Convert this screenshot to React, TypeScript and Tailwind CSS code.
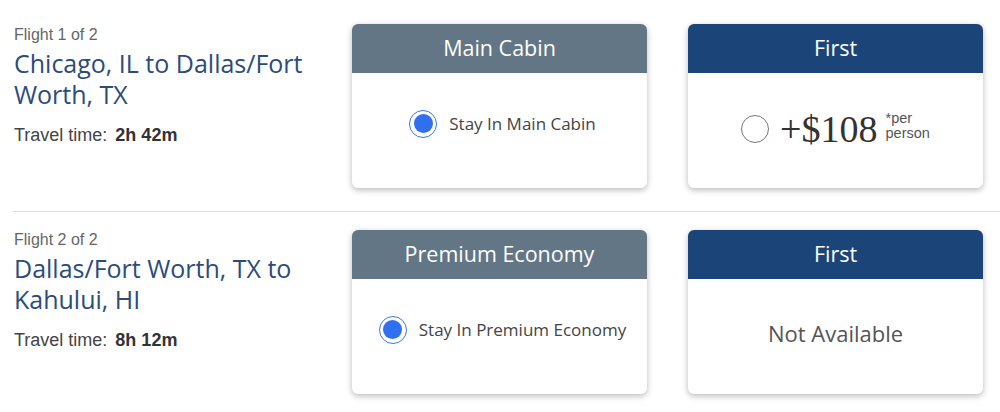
import React from 'react';

interface Flight {
  label: string;
  route: string;
  travel: string;
  cabin: string;
  stayLabel: string;
  upgrade: string | null;
}

const flights: Flight[] = [
  {
    label: 'Flight 1 of 2',
    route: 'Chicago, IL to Dallas/Fort Worth, TX',
    travel: '2h 42m',
    cabin: 'Main Cabin',
    stayLabel: 'Stay In Main Cabin',
    upgrade: '+$108',
  },
  {
    label: 'Flight 2 of 2',
    route: 'Dallas/Fort Worth, TX to Kahului, HI',
    travel: '8h 12m',
    cabin: 'Premium Economy',
    stayLabel: 'Stay In Premium Economy',
    upgrade: null,
  },
];

const humanist = { fontFamily: '"Open Sans", "Noto Sans", sans-serif' };
const arial = { fontFamily: '"Liberation Sans", Arial, sans-serif' };

function Card({ title, dark, children }: { title: string; dark?: boolean; children: React.ReactNode }) {
  return (
    <div className="w-[295px] h-[164px] rounded-[6px] bg-white overflow-hidden flex flex-col shadow-[0_2px_6px_rgba(0,0,0,0.28)]">
      <div
        className={
          dark
            ? 'h-[49px] shrink-0 bg-[#1b4479] flex items-center justify-center text-white text-[21.5px]'
            : 'h-[49px] shrink-0 bg-[#637685] flex items-center justify-center text-white text-[21.5px]'
        }
        style={humanist}
      >
        {title}
      </div>
      <div className="flex-1 flex items-center justify-center">{children}</div>
    </div>
  );
}

function FlightRow({ flight, first }: { flight: Flight; first: boolean }) {
  return (
    <div className={first ? 'flex pt-[24px] pb-[23px]' : 'flex pt-[18px] pb-[19px]'}>
      {/* Flight info */}
      <div className={first ? 'w-[352px] pl-[14px] pt-[2px]' : 'w-[352px] pl-[14px] pt-[1px]'}>
        <div className="text-[16px] leading-[18px] text-[#666]" style={arial}>
          {flight.label}
        </div>
        <div className="mt-[4px] text-[25px] leading-[31px] text-[#2c4c7c] w-[300px]" style={humanist}>
          {flight.route}
        </div>
        <div className="mt-[15px] text-[18px] leading-[20px] text-[#444]" style={arial}>
          Travel time: <span className="ml-[3px] font-bold text-[#333]">{flight.travel}</span>
        </div>
      </div>

      <div className="flex gap-[41px]">
        {/* Current cabin */}
        <Card title={flight.cabin}>
          <div className="flex items-center gap-[12px] pb-[14px] pl-[6px]">
            <div className="w-[28px] h-[28px] rounded-full border-[1.5px] border-[#3b78e0] flex items-center justify-center">
              <div className="w-[19px] h-[19px] rounded-full bg-[#2f6ff0]" />
            </div>
            <span className="text-[17px] text-[#444]" style={humanist}>
              {flight.stayLabel}
            </span>
          </div>
        </Card>

        {/* Upgrade */}
        <Card title="First" dark>
          {flight.upgrade ? (
            <div className="flex items-center pb-[3px]">
              <div className="w-[28px] h-[28px] rounded-full border-[1.5px] border-[#777]" />
              <span
                className="ml-[11px] text-[38px] leading-none text-[#333]"
                style={{ fontFamily: '"Liberation Serif", "Times New Roman", serif' }}
              >
                {flight.upgrade}
              </span>
              <span className="ml-[8px] mb-[6px] text-[14.5px] leading-[15px] text-[#555]" style={arial}>
                <span className="block">*per</span>
                <span className="block">person</span>
              </span>
            </div>
          ) : (
            <span className="pb-[6px] text-[22px] text-[#555]" style={humanist}>
              Not Available
            </span>
          )}
        </Card>
      </div>
    </div>
  );
}

export default function App() {
  return (
    <div className="w-[1000px] h-[412px] bg-white overflow-hidden">
      {flights.map((f, i) => (
        <React.Fragment key={f.label}>
          {i > 0 && <div className="ml-[13px] h-px bg-[#dcdcdc]" />}
          <FlightRow flight={f} first={i === 0} />
        </React.Fragment>
      ))}
    </div>
  );
}
